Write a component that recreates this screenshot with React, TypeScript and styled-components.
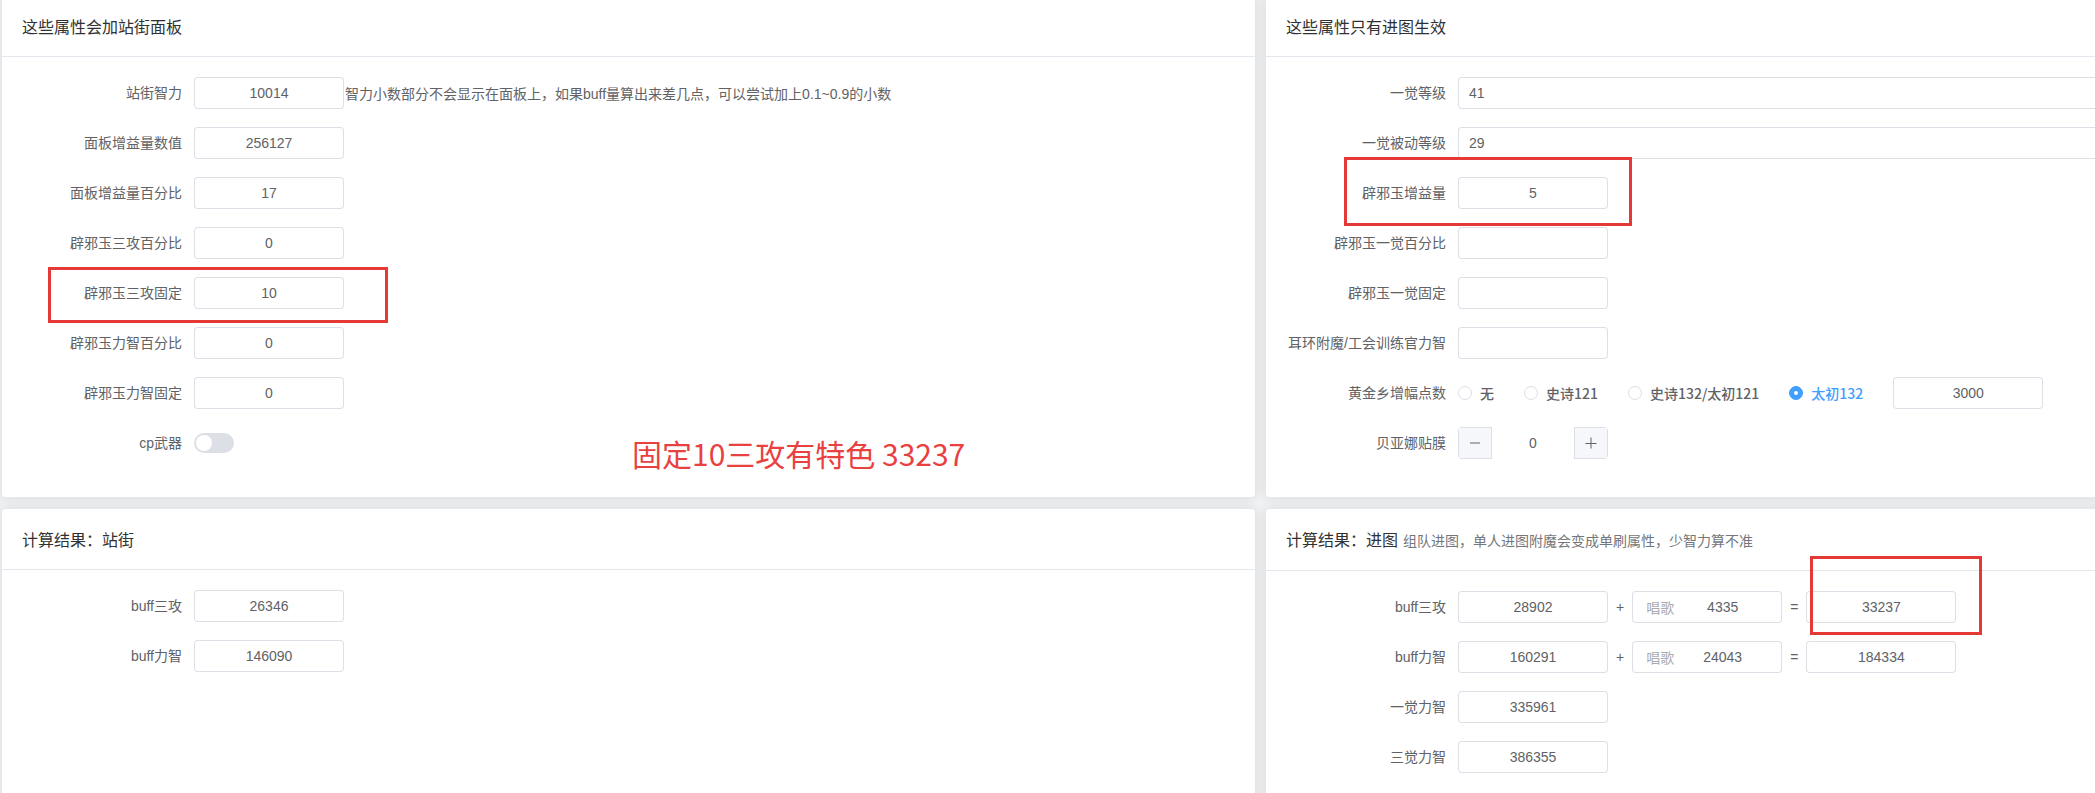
import styled, { createGlobalStyle } from "styled-components";

const GlobalStyle = createGlobalStyle`
  html, body {
    margin: 0;
    padding: 0;
    overflow: hidden;
    background: #f2f3f5;
    font-family: "Liberation Sans", "Noto Sans CJK SC", sans-serif;
  }
  * {
    box-sizing: border-box;
  }
`;

type Row = { label: string; value: string; wide?: boolean };

const streetRows: Row[] = [
  { label: "面板增益量数值", value: "256127" },
  { label: "面板增益量百分比", value: "17" },
  { label: "辟邪玉三攻百分比", value: "0" },
  { label: "辟邪玉三攻固定", value: "10" },
  { label: "辟邪玉力智百分比", value: "0" },
  { label: "辟邪玉力智固定", value: "0" },
];

const dungeonRows: Row[] = [
  { label: "一觉等级", value: "41", wide: true },
  { label: "一觉被动等级", value: "29", wide: true },
  { label: "辟邪玉增益量", value: "5" },
  { label: "辟邪玉一觉百分比", value: "" },
  { label: "辟邪玉一觉固定", value: "" },
  { label: "耳环附魔/工会训练官力智", value: "" },
];

const radios = [
  { text: "无", checked: false },
  { text: "史诗121", checked: false },
  { text: "史诗132/太初121", checked: false },
  { text: "太初132", checked: true },
];

function TextField({ value, wide }: { value: string; wide?: boolean }) {
  return (
    <Field $wide={wide}>
      <FieldInput $left={wide} defaultValue={value} />
    </Field>
  );
}

function App() {
  return (
    <Root>
      <GlobalStyle />
      <Grid>
        <Card>
          <CardHeader>这些属性会加站街面板</CardHeader>
          <CardBody>
            <FormItem>
              <Label>站街智力</Label>
              <Content>
                <TextField value="10014" />
                <Hint>智力小数部分不会显示在面板上，如果buff量算出来差几点，可以尝试加上0.1~0.9的小数</Hint>
              </Content>
            </FormItem>
            {streetRows.map((r) => (
              <FormItem key={r.label}>
                <Label>{r.label}</Label>
                <Content>
                  <TextField value={r.value} />
                </Content>
              </FormItem>
            ))}
            <FormItem>
              <Label>cp武器</Label>
              <Content>
                <Switch />
              </Content>
            </FormItem>
          </CardBody>
        </Card>

        <Card>
          <CardHeader>这些属性只有进图生效</CardHeader>
          <CardBody>
            {dungeonRows.map((r) => (
              <FormItem key={r.label}>
                <Label>{r.label}</Label>
                <Content>
                  <TextField value={r.value} wide={r.wide} />
                </Content>
              </FormItem>
            ))}
            <FormItem>
              <Label>黄金乡增幅点数</Label>
              <Content>
                {radios.map((r) => (
                  <RadioItem key={r.text}>
                    <RadioCircle $checked={r.checked} />
                    <RadioText $checked={r.checked}>{r.text}</RadioText>
                  </RadioItem>
                ))}
                <TextField value="3000" />
              </Content>
            </FormItem>
            <FormItem>
              <Label>贝亚娜贴膜</Label>
              <Content>
                <NumberBox>
                  <StepButton $side="left">
                    <svg width="12" height="12" viewBox="0 0 12 12">
                      <path d="M1 6h10" stroke="#606266" strokeWidth="1" />
                    </svg>
                  </StepButton>
                  <NumberValue defaultValue="0" />
                  <StepButton $side="right">
                    <svg width="12" height="12" viewBox="0 0 12 12">
                      <path d="M0.5 6.5h11M6 0.5v11" stroke="#606266" strokeWidth="1" />
                    </svg>
                  </StepButton>
                </NumberBox>
              </Content>
            </FormItem>
          </CardBody>
        </Card>

        <Card>
          <CardHeader>计算结果：站街</CardHeader>
          <CardBody>
            <FormItem>
              <Label>buff三攻</Label>
              <Content>
                <TextField value="26346" />
              </Content>
            </FormItem>
            <FormItem>
              <Label>buff力智</Label>
              <Content>
                <TextField value="146090" />
              </Content>
            </FormItem>
          </CardBody>
        </Card>

        <Card>
          <CardHeader>
            计算结果：进图<SubTitle>组队进图，单人进图附魔会变成单刷属性，少智力算不准</SubTitle>
          </CardHeader>
          <CardBody>
            <FormItem>
              <Label>buff三攻</Label>
              <Content>
                <TextField value="28902" />
                <Op>+</Op>
                <Field>
                  <Prefix>唱歌</Prefix>
                  <FieldInput defaultValue="4335" />
                </Field>
                <Op>=</Op>
                <TextField value="33237" />
              </Content>
            </FormItem>
            <FormItem>
              <Label>buff力智</Label>
              <Content>
                <TextField value="160291" />
                <Op>+</Op>
                <Field>
                  <Prefix>唱歌</Prefix>
                  <FieldInput defaultValue="24043" />
                </Field>
                <Op>=</Op>
                <TextField value="184334" />
              </Content>
            </FormItem>
            <FormItem>
              <Label>一觉力智</Label>
              <Content>
                <TextField value="335961" />
              </Content>
            </FormItem>
            <FormItem>
              <Label>三觉力智</Label>
              <Content>
                <TextField value="386355" />
              </Content>
            </FormItem>
          </CardBody>
        </Card>
      </Grid>

      {/* hand-drawn annotations on top of the screenshot */}
      <MarkBox style={{ left: 48, top: 267, width: 340, height: 56 }} />
      <MarkBox style={{ left: 1344, top: 157, width: 288, height: 69 }} />
      <MarkBox style={{ left: 1810, top: 556, width: 172, height: 79 }} />
      <Note>固定10三攻有特色 33237</Note>
    </Root>
  );
}

const Root = styled.div`
  position: relative;
  width: 100vw;
  height: 100vh;
  overflow: hidden;
`;

const Grid = styled.div`
  display: grid;
  grid-template-columns: 1255px 1255px;
  column-gap: 9px;
  row-gap: 10px;
  padding-left: 1px;
  margin-top: -5px;
`;

const Card = styled.div`
  background: #fff;
  border: 1px solid #e4e7ed;
  border-radius: 4px;
  box-shadow: 0 0 12px rgba(0, 0, 0, 0.1);
  overflow: hidden;
  color: #303133;
`;

const CardHeader = styled.div`
  padding: 18px 20px;
  border-bottom: 1px solid #e4e7ed;
  font-family: "Noto Sans CJK SC", sans-serif;
  font-size: 16px;
  line-height: 24px;
  color: #303133;
  white-space: nowrap;
`;

const SubTitle = styled.span`
  margin-left: 5px;
  font-size: 14px;
  color: #73767a;
`;

const CardBody = styled.div`
  padding: 20px;
`;

const FormItem = styled.div`
  display: flex;
  margin-bottom: 18px;
`;

const Label = styled.label`
  flex-shrink: 0;
  width: 172px;
  padding-right: 12px;
  text-align: right;
  font-size: 14px;
  line-height: 32px;
  color: #606266;
  white-space: nowrap;
`;

const Content = styled.div`
  flex: 1;
  display: flex;
  align-items: center;
  min-height: 32px;
  font-size: 14px;
  white-space: nowrap;
`;

const Field = styled.div<{ $wide?: boolean }>`
  display: flex;
  align-items: center;
  flex: ${(p) => (p.$wide ? "1" : "none")};
  width: ${(p) => (p.$wide ? "auto" : "150px")};
  height: 32px;
  padding: 1px 11px;
  background: #fff;
  border-radius: 4px;
  box-shadow: 0 0 0 1px #dcdfe6 inset;
`;

const FieldInput = styled.input<{ $left?: boolean }>`
  flex: 1;
  min-width: 0;
  width: 100%;
  height: 30px;
  padding: 0;
  border: none;
  outline: none;
  background: transparent;
  font-family: "Liberation Sans", "Noto Sans CJK SC", sans-serif;
  font-size: 14px;
  color: #606266;
  text-align: ${(p) => (p.$left ? "left" : "center")};
`;

const Prefix = styled.span`
  margin-left: 3px;
  color: #a8abb2;
  font-size: 14px;
`;

const Hint = styled.span`
  margin-left: 1px;
  color: #606266;
  font-size: 14px;
`;

const Op = styled.span`
  padding: 0 8px;
  color: #606266;
  font-size: 14px;
`;

const Switch = styled.span`
  position: relative;
  display: inline-block;
  width: 40px;
  height: 20px;
  border-radius: 10px;
  background: #dcdfe6;

  &::after {
    content: "";
    position: absolute;
    top: 2px;
    left: 2px;
    width: 16px;
    height: 16px;
    border-radius: 50%;
    background: #fff;
  }
`;

const RadioItem = styled.label`
  display: inline-flex;
  align-items: center;
  margin-right: 30px;
  height: 32px;
`;

const RadioCircle = styled.span<{ $checked?: boolean }>`
  position: relative;
  width: 14px;
  height: 14px;
  border-radius: 50%;
  border: 1px solid ${(p) => (p.$checked ? "#409eff" : "#dcdfe6")};
  background: ${(p) => (p.$checked ? "#409eff" : "#fff")};

  &::after {
    content: "";
    display: ${(p) => (p.$checked ? "block" : "none")};
    position: absolute;
    left: 50%;
    top: 50%;
    width: 4px;
    height: 4px;
    margin: -2px 0 0 -2px;
    border-radius: 50%;
    background: #fff;
  }
`;

const RadioText = styled.span<{ $checked?: boolean }>`
  padding-left: 8px;
  font-family: "Noto Sans CJK SC", sans-serif;
  font-size: 14px;
  font-weight: 500;
  color: ${(p) => (p.$checked ? "#409eff" : "#606266")};
`;

const NumberBox = styled.div`
  display: flex;
  width: 150px;
  height: 32px;
  border-radius: 4px;
  box-shadow: 0 0 0 1px #dcdfe6 inset;
  overflow: hidden;
`;

const StepButton = styled.span<{ $side: "left" | "right" }>`
  display: flex;
  align-items: center;
  justify-content: center;
  width: 33px;
  margin: 1px 0;
  ${(p) => (p.$side === "left" ? "margin-left: 1px;" : "margin-right: 1px;")}
  background: #f5f7fa;
  ${(p) =>
    p.$side === "left"
      ? "border-right: 1px solid #dcdfe6;"
      : "border-left: 1px solid #dcdfe6;"}
`;

const NumberValue = styled.input`
  flex: 1;
  min-width: 0;
  border: none;
  outline: none;
  text-align: center;
  font-family: "Liberation Sans", sans-serif;
  font-size: 14px;
  color: #606266;
`;

const MarkBox = styled.div`
  position: absolute;
  border: 3px solid #e53935;
  pointer-events: none;
`;

const Note = styled.div`
  position: absolute;
  left: 632px;
  top: 438px;
  font-family: "Noto Sans CJK SC", sans-serif;
  font-size: 30px;
  line-height: 30px;
  color: #e8413f;
  white-space: nowrap;
`;

export default App;
